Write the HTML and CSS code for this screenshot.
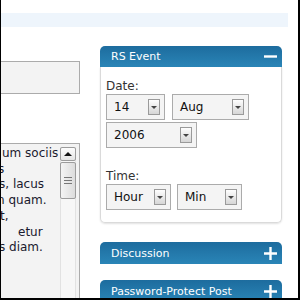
FILE: index.html
```html
<!DOCTYPE html>
<html lang="en">
<head>
<meta charset="utf-8">
<title>Write Post</title>
<link rel="stylesheet" href="styles.css">
</head>
<body>
<div class="frame">
    <div class="topbar"></div>
    <div class="main">
        <div class="leftcol">
            <div class="titlebox"></div>
            <div class="editor">
                <div class="editor-text">
                    <div class="ln in1">um sociis</div>
                    <div class="ln cut3">s</div>
                    <div class="ln cut2">s, lacus</div>
                    <div class="ln cut4">n quam.</div>
                    <div class="ln cut1">t,</div>
                    <div class="ln in17">etur</div>
                    <div class="ln cut2">s diam.</div>
                </div>
                <div class="scrollbar">
                    <div class="sb-up"></div>
                    <div class="sb-thumb"><span></span><span></span><span></span></div>
                </div>
            </div>
        </div>
        <div class="sidebar">
            <div class="widget">
                <div class="widget-head">
                    <span>RS Event</span>
                    <svg width="13" height="13" viewBox="0 0 13 13"><path d="M0 6.5H13" stroke="#fff" stroke-width="2.4"/></svg>
                </div>
                <div class="widget-body">
                    <div class="label">Date:</div>
                    <div class="row">
                        <div class="sel w-day"><span>14</span><i class="arrow"></i></div>
                        <div class="sel w-month"><span>Aug</span><i class="arrow"></i></div>
                    </div>
                    <div class="row second">
                        <div class="sel w-year"><span>2006</span><i class="arrow"></i></div>
                    </div>
                    <div class="label time">Time:</div>
                    <div class="row narrow">
                        <div class="sel w-time"><span>Hour</span><i class="arrow"></i></div>
                        <div class="sel w-time"><span>Min</span><i class="arrow"></i></div>
                    </div>
                </div>
            </div>
            <div class="widget-head closed">
                <span>Discussion</span>
                <svg width="13" height="13" viewBox="0 0 13 13"><path d="M0 6.5H13M6.5 0V13" stroke="#fff" stroke-width="2.4"/></svg>
            </div>
            <div class="widget-head closed">
                <span>Password-Protect Post</span>
                <svg width="13" height="13" viewBox="0 0 13 13"><path d="M0 6.5H13M6.5 0V13" stroke="#fff" stroke-width="2.4"/></svg>
            </div>
        </div>
    </div>
</div>
</body>
</html>
```

FILE: styles.css
```css
body{
    margin: 0;
    background: #fff;
    font-family: "DejaVu Sans", Verdana, sans-serif;
}
/* the black frame of the screenshot */
.frame{
    width: 297px;
    height: 298px;
    border-left: 1px solid #000;
    border-right: 2px solid #000;
    border-bottom: 2px solid #000;
    overflow: hidden;
}
.topbar{
    margin-top: 13px;
    width: 287px;
    height: 14px;
    background: #eef5fc;
}
.main{
    display: flex;
    align-items: flex-start;
    gap: 20px;
}
.leftcol{
    width: 79px;
    flex-shrink: 0;
    padding-top: 34px;
}
.titlebox{
    box-sizing: border-box;
    height: 33px;
    border: 1px solid #ababab;
    border-left: none;
    background: #f3f3f3;
}
.editor{
    margin-top: 49px;
    height: 170px;
    display: flex;
    padding: 3px 3px 0 0;
    border-top: 1px solid #ababab;
    border-right: 1px solid #ababab;
    background: #f3f3f3;
}
.editor-text{
    flex: 1;
    overflow: hidden;
    font-size: 12px;
    line-height: 15.7px;
    color: #1a1a2e;
    white-space: nowrap;
    margin-top: -1px;
}
.in1{ padding-left: 1px; }
.in17{ padding-left: 17px; }
.cut1{ margin-left: -1px; }
.cut2{ margin-left: -2px; }
.cut3{ margin-left: -3px; }
.cut4{ margin-left: -4px; }
.scrollbar{
    width: 16px;
    display: flex;
    flex-direction: column;
    gap: 1px;
    background: #f7f7f7;
    box-shadow: inset 1px 0 #e2e2e2, inset -1px 0 #e2e2e2;
}
.sb-up{
    box-sizing: border-box;
    height: 14px;
    border: 1px solid #9c9c9c;
    border-radius: 2px;
    background: linear-gradient(#fdfdfd, #e4e4e4);
    display: flex;
    align-items: center;
    justify-content: center;
}
.sb-up::after{
    content: "";
    border-left: 4px solid transparent;
    border-right: 4px solid transparent;
    border-bottom: 4px solid #111;
}
.sb-thumb{
    box-sizing: border-box;
    height: 37px;
    border: 1px solid #9c9c9c;
    border-radius: 2px;
    background: linear-gradient(90deg, #f4f4f4, #dcdcdc);
    display: flex;
    flex-direction: column;
    align-items: center;
    justify-content: center;
    gap: 2px;
}
.sb-thumb span{
    width: 8px;
    height: 1px;
    background: #777;
}
.sidebar{
    width: 182px;
    flex-shrink: 0;
    padding-top: 19px;
}
.widget-head{
    height: 21px;
    padding: 0 5px 0 11px;
    display: flex;
    align-items: center;
    justify-content: space-between;
    border-radius: 5px 5px 0 0;
    background: linear-gradient(#1d6c9e, #2a85b7);
    color: #fff;
    font-size: 11px;
}
.widget-head.closed{
    height: 22px;
    margin-top: 16px;
}
.widget + .widget-head.closed{
    margin-top: 19px;
}
.widget-body{
    padding: 11px 5px 12px;
    border: 1px solid #dadada;
    border-top: none;
    border-radius: 0 0 5px 5px;
    box-shadow: 0 1px 2px rgba(0,0,0,0.12);
}
.label{
    font-size: 12px;
    line-height: 16px;
    color: #333;
}
.label.time{
    margin-top: 20px;
}
.row{
    display: flex;
    gap: 7px;
}
.row.second{
    margin-top: 2px;
}
.row.narrow{
    gap: 6px;
}
.sel{
    box-sizing: border-box;
    height: 26px;
    padding: 0 4px 0 7px;
    display: flex;
    align-items: center;
    justify-content: space-between;
    border: 1px solid #ababab;
    background: #f4f4f4;
    font-size: 12px;
    color: #111;
}
.w-day{ width: 59px; }
.w-month{ width: 77px; }
.w-year{ width: 91px; }
.w-time{ width: 65px; }
.arrow{
    box-sizing: border-box;
    width: 12px;
    height: 16px;
    display: flex;
    align-items: center;
    justify-content: center;
    border: 1px solid #9a9a9a;
    background: linear-gradient(#fefefe, #d6d6d6);
}
.arrow::after{
    content: "";
    border-left: 3px solid transparent;
    border-right: 3px solid transparent;
    border-top: 3px solid #444;
}
```
